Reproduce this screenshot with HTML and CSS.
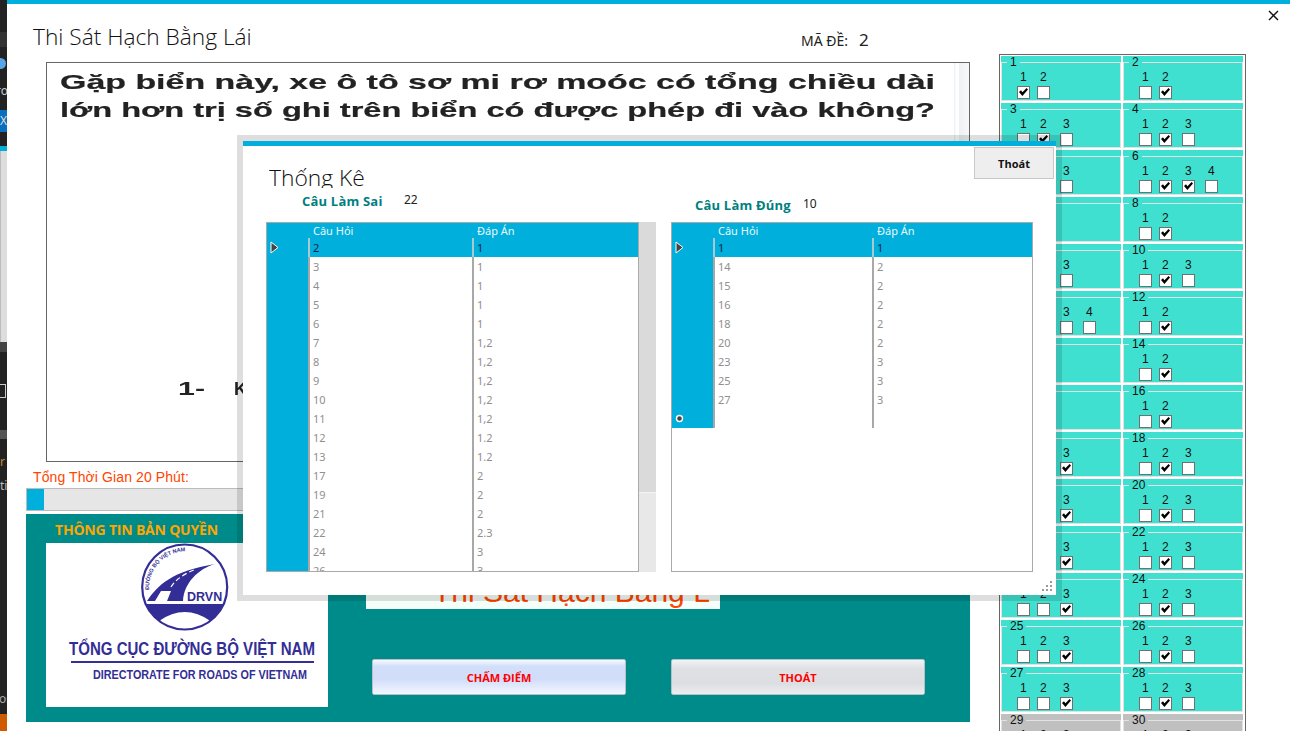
FILE: index.html
```html
<!DOCTYPE html>
<html lang="vi">
<head>
<meta charset="UTF-8">
<title>Thi Sát Hạch Bằng Lái</title>
<link rel="stylesheet" href="styles.css">
</head>
<body>
<div class="strip">
	<div class="s-gray"></div>
	<div class="s-dot"></div>
	<div class="s-txt">ro</div>
	<div class="s-blue">X</div>
	<div class="s-cyan"></div>
	<div class="s-light"></div>
	<div class="s-bar"></div>
	<div class="s-icon"></div>
	<div class="s-bar2"></div>
	<div class="s-r">r</div>
	<div class="s-ti">ti</div>
	<div class="s-os">os</div>
	<div class="s-orange"></div>
</div>

<div class="app">
	<a class="close">
		<svg width="11" height="11" viewBox="0 0 11 11"><path d="M1 1L10 10M10 1L1 10" stroke="#111" stroke-width="1.4" fill="none"/></svg>
	</a>
	<div class="left">
		<header class="head">
			<h1 class="apptitle">Thi Sát Hạch Bằng Lái</h1>
			<div class="made"><span>MÃ ĐỀ:</span><b>2</b></div>
		</header>
		<div class="picture">
			<svg class="q-svg" width="922" height="398" viewBox="0 0 922 398">
				<text x="13" y="26" textLength="875" lengthAdjust="spacingAndGlyphs" class="q-line">Gặp biển này, xe ô tô sơ mi rơ moóc có tổng chiều dài</text>
				<text x="13" y="54" textLength="875" lengthAdjust="spacingAndGlyphs" class="q-line">lớn hơn trị số ghi trên biển có được phép đi vào không?</text>
				<text x="131" y="332" textLength="27" lengthAdjust="spacingAndGlyphs" class="q-answer">1-</text>
				<text x="187" y="332" class="q-answer">K</text>
			</svg>
		</div>
		<div class="timer-label">Tổng Thời Gian 20 Phút:</div>
		<div class="progress"><div class="progress-fill"></div></div>
		<div class="panel">
			<div class="panel-left">
				<div class="panel-title">THÔNG TIN BẢN QUYỀN</div>
				<div class="logo">
					<svg width="282" height="164" viewBox="0 0 282 164">
						<defs><path id="arc" d="M103 47A37 37 0 0 1 154 11"/></defs>
						<circle cx="138.7" cy="44" r="42.5" fill="#fff" stroke="#332e96" stroke-width="2.2"/>
						<path d="M99.7 61H177.7A42.5 42.5 0 0 1 164.5 78Q138.7 60 113 78A42.5 42.5 0 0 1 99.7 61Z" fill="#332e96"/>
						<path d="M101 58C112 42 126 28 169 21C152 26 138 40 137 58H121L125 48H115L109 58Z" fill="#332e96"/>
						<path d="M125 44C130 36 138 31 150 26" fill="none" stroke="#fff" stroke-width="1.2" stroke-dasharray="5 3"/>
						<text x="141" y="58" class="logo-drvn">DRVN</text>
						<text class="logo-arc"><textPath href="#arc">ĐƯỜNG BỘ VIỆT NAM</textPath></text>
						<text x="23" y="112" textLength="246" lengthAdjust="spacingAndGlyphs" class="logo-big">TỔNG CỤC ĐƯỜNG BỘ VIỆT NAM</text>
						<rect x="25" y="118" width="243" height="2" fill="#332e96"/>
						<text x="47" y="136" textLength="214" lengthAdjust="spacingAndGlyphs" class="logo-small">DIRECTORATE FOR ROADS OF VIETNAM</text>
					</svg>
				</div>
			</div>
			<div class="panel-right">
				<div class="titlebox">Thi Sát Hạch Bằng L</div>
				<div class="actions">
					<button class="btn btn-blue">CHẤM ĐIỂM</button>
					<button class="btn btn-gray">THOÁT</button>
				</div>
			</div>
		</div>
	</div>

	<div class="sheet">
		<div class="q"><fieldset><legend>1</legend><div class="opts"><label>1<input type="checkbox" checked></label><label>2<input type="checkbox"></label></div></fieldset></div>
		<div class="q"><fieldset><legend>2</legend><div class="opts"><label>1<input type="checkbox"></label><label>2<input type="checkbox" checked></label></div></fieldset></div>
		<div class="q"><fieldset><legend>3</legend><div class="opts"><label>1<input type="checkbox"></label><label>2<input type="checkbox" checked></label><label>3<input type="checkbox"></label></div></fieldset></div>
		<div class="q"><fieldset><legend>4</legend><div class="opts"><label>1<input type="checkbox"></label><label>2<input type="checkbox" checked></label><label>3<input type="checkbox"></label></div></fieldset></div>
		<div class="q"><fieldset><legend>5</legend><div class="opts"><label>1<input type="checkbox"></label><label>2<input type="checkbox"></label><label>3<input type="checkbox"></label></div></fieldset></div>
		<div class="q"><fieldset><legend>6</legend><div class="opts"><label>1<input type="checkbox"></label><label>2<input type="checkbox" checked></label><label>3<input type="checkbox" checked></label><label>4<input type="checkbox"></label></div></fieldset></div>
		<div class="q"><fieldset><legend>7</legend></fieldset></div>
		<div class="q"><fieldset><legend>8</legend><div class="opts"><label>1<input type="checkbox"></label><label>2<input type="checkbox" checked></label></div></fieldset></div>
		<div class="q"><fieldset><legend>9</legend><div class="opts"><label>1<input type="checkbox"></label><label>2<input type="checkbox"></label><label>3<input type="checkbox"></label></div></fieldset></div>
		<div class="q"><fieldset><legend>10</legend><div class="opts"><label>1<input type="checkbox"></label><label>2<input type="checkbox" checked></label><label>3<input type="checkbox"></label></div></fieldset></div>
		<div class="q"><fieldset><legend>11</legend><div class="opts"><label>1<input type="checkbox"></label><label>2<input type="checkbox"></label><label>3<input type="checkbox"></label><label>4<input type="checkbox"></label></div></fieldset></div>
		<div class="q"><fieldset><legend>12</legend><div class="opts"><label>1<input type="checkbox"></label><label>2<input type="checkbox" checked></label></div></fieldset></div>
		<div class="q"><fieldset><legend>13</legend></fieldset></div>
		<div class="q"><fieldset><legend>14</legend><div class="opts"><label>1<input type="checkbox"></label><label>2<input type="checkbox" checked></label></div></fieldset></div>
		<div class="q"><fieldset><legend>15</legend></fieldset></div>
		<div class="q"><fieldset><legend>16</legend><div class="opts"><label>1<input type="checkbox"></label><label>2<input type="checkbox" checked></label></div></fieldset></div>
		<div class="q"><fieldset><legend>17</legend><div class="opts"><label>1<input type="checkbox"></label><label>2<input type="checkbox"></label><label>3<input type="checkbox" checked></label></div></fieldset></div>
		<div class="q"><fieldset><legend>18</legend><div class="opts"><label>1<input type="checkbox"></label><label>2<input type="checkbox" checked></label><label>3<input type="checkbox"></label></div></fieldset></div>
		<div class="q"><fieldset><legend>19</legend><div class="opts"><label>1<input type="checkbox"></label><label>2<input type="checkbox"></label><label>3<input type="checkbox" checked></label></div></fieldset></div>
		<div class="q"><fieldset><legend>20</legend><div class="opts"><label>1<input type="checkbox"></label><label>2<input type="checkbox" checked></label><label>3<input type="checkbox"></label></div></fieldset></div>
		<div class="q"><fieldset><legend>21</legend><div class="opts"><label>1<input type="checkbox"></label><label>2<input type="checkbox"></label><label>3<input type="checkbox" checked></label></div></fieldset></div>
		<div class="q"><fieldset><legend>22</legend><div class="opts"><label>1<input type="checkbox"></label><label>2<input type="checkbox" checked></label><label>3<input type="checkbox"></label></div></fieldset></div>
		<div class="q"><fieldset><legend>23</legend><div class="opts"><label>1<input type="checkbox"></label><label>2<input type="checkbox"></label><label>3<input type="checkbox" checked></label></div></fieldset></div>
		<div class="q"><fieldset><legend>24</legend><div class="opts"><label>1<input type="checkbox"></label><label>2<input type="checkbox" checked></label><label>3<input type="checkbox"></label></div></fieldset></div>
		<div class="q"><fieldset><legend>25</legend><div class="opts"><label>1<input type="checkbox"></label><label>2<input type="checkbox"></label><label>3<input type="checkbox" checked></label></div></fieldset></div>
		<div class="q"><fieldset><legend>26</legend><div class="opts"><label>1<input type="checkbox"></label><label>2<input type="checkbox" checked></label><label>3<input type="checkbox"></label></div></fieldset></div>
		<div class="q"><fieldset><legend>27</legend><div class="opts"><label>1<input type="checkbox"></label><label>2<input type="checkbox"></label><label>3<input type="checkbox" checked></label></div></fieldset></div>
		<div class="q"><fieldset><legend>28</legend><div class="opts"><label>1<input type="checkbox"></label><label>2<input type="checkbox" checked></label><label>3<input type="checkbox"></label></div></fieldset></div>
		<div class="q off"><fieldset><legend>29</legend><div class="opts"><label>1<input type="checkbox"></label><label>2<input type="checkbox"></label><label>3<input type="checkbox"></label></div></fieldset></div>
		<div class="q off"><fieldset><legend>30</legend><div class="opts"><label>1<input type="checkbox"></label><label>2<input type="checkbox"></label><label>3<input type="checkbox"></label></div></fieldset></div>
	</div>
</div>

<div class="dialog">
	<div class="dlg-head">
		<h2 class="dlg-title">Thống Kê</h2>
		<button class="dlg-exit">Thoát</button>
	</div>
	<div class="dlg-cols">
		<div class="col col-wrong">
			<div class="count count-wrong"><b>Câu Làm Sai</b><span>22</span></div>
			<div class="gridwrap">
				<div class="grid">
					<table>
						<thead><tr><th class="rh"></th><th>Câu Hỏi</th><th>Đáp Án</th></tr></thead>
						<tbody>
							<tr class="sel"><td class="rh"><svg width="9" height="13" viewBox="0 0 9 13"><path d="M1 1V12L8 6.5Z" fill="#444" stroke="#fff" stroke-width="1"/></svg></td><td>2</td><td>1</td></tr>
							<tr><td class="rh"></td><td>3</td><td>1</td></tr>
							<tr><td class="rh"></td><td>4</td><td>1</td></tr>
							<tr><td class="rh"></td><td>5</td><td>1</td></tr>
							<tr><td class="rh"></td><td>6</td><td>1</td></tr>
							<tr><td class="rh"></td><td>7</td><td>1,2</td></tr>
							<tr><td class="rh"></td><td>8</td><td>1,2</td></tr>
							<tr><td class="rh"></td><td>9</td><td>1,2</td></tr>
							<tr><td class="rh"></td><td>10</td><td>1,2</td></tr>
							<tr><td class="rh"></td><td>11</td><td>1,2</td></tr>
							<tr><td class="rh"></td><td>12</td><td>1.2</td></tr>
							<tr><td class="rh"></td><td>13</td><td>1.2</td></tr>
							<tr><td class="rh"></td><td>17</td><td>2</td></tr>
							<tr><td class="rh"></td><td>19</td><td>2</td></tr>
							<tr><td class="rh"></td><td>21</td><td>2</td></tr>
							<tr><td class="rh"></td><td>22</td><td>2.3</td></tr>
							<tr><td class="rh"></td><td>24</td><td>3</td></tr>
							<tr><td class="rh"></td><td>26</td><td>3</td></tr>
						</tbody>
					</table>
				</div>
				<div class="scroll"><div class="thumb"></div></div>
			</div>
		</div>
		<div class="col col-right">
			<div class="count count-right"><b>Câu Làm Đúng</b><span>10</span></div>
			<div class="gridwrap">
				<div class="grid">
					<table>
						<thead><tr><th class="rh"></th><th>Câu Hỏi</th><th>Đáp Án</th></tr></thead>
						<tbody>
							<tr class="sel"><td class="rh"><svg width="9" height="13" viewBox="0 0 9 13"><path d="M1 1V12L8 6.5Z" fill="#444" stroke="#fff" stroke-width="1"/></svg></td><td>1</td><td>1</td></tr>
							<tr><td class="rh"></td><td>14</td><td>2</td></tr>
							<tr><td class="rh"></td><td>15</td><td>2</td></tr>
							<tr><td class="rh"></td><td>16</td><td>2</td></tr>
							<tr><td class="rh"></td><td>18</td><td>2</td></tr>
							<tr><td class="rh"></td><td>20</td><td>2</td></tr>
							<tr><td class="rh"></td><td>23</td><td>3</td></tr>
							<tr><td class="rh"></td><td>25</td><td>3</td></tr>
							<tr><td class="rh"></td><td>27</td><td>3</td></tr>
							<tr><td class="rh"><svg width="9" height="9" viewBox="0 0 9 9"><circle cx="4.5" cy="4.5" r="3" fill="#444" stroke="#fff" stroke-width="1.4"/></svg></td><td></td><td></td></tr>
						</tbody>
					</table>
				</div>
			</div>
		</div>
	</div>
	<svg class="grip" width="11" height="12" viewBox="0 0 11 12" fill="#9a9a9a">
		<rect x="8" y="0" width="2" height="2"/>
		<rect x="4" y="4" width="2" height="2"/><rect x="8" y="4" width="2" height="2"/>
		<rect x="0" y="8" width="2" height="2"/><rect x="4" y="8" width="2" height="2"/><rect x="8" y="8" width="2" height="2"/>
	</svg>
</div>
</body>
</html>
```

FILE: styles.css
```css
html, body {margin:0; padding:0; height:731px; overflow:hidden; background:#fff; color:#222; font-family:"Noto Sans", "Open Sans", sans-serif;}
body {display:flex;}

/* what's left of the desktop behind the window */
.strip {position:relative; width:7px; height:731px; flex:none; overflow:hidden; background:#222; color:#ccc; font-size:12px; line-height:14px;}
.strip div {position:absolute; left:0; width:7px; white-space:nowrap;}
.s-gray {top:32px; height:15px; background:#333;}
.s-dot {top:58px; height:11px; left:-5px !important; width:11px !important; border-radius:50%; background:#5aa5e8;}
.s-txt {top:84px; left:-4px !important; width:14px !important;}
.s-blue {top:110px; height:22px; line-height:22px; background:#0a6fbf; color:#ddd;}
.s-cyan {top:146px; height:5px; background:#00afdb;}
.s-light {top:151px; height:191px; background:linear-gradient(90deg, #bbb 1px, #ddd 1px);}
.s-bar {top:342px; height:10px; background:#444;}
.s-icon {top:384px; height:14px; left:0; width:6px !important; border:1px solid #ccc; border-left:0; box-sizing:border-box;}
.s-bar2 {top:430px; height:9px; background:#555;}
.s-r {top:455px; color:#c9873a;}
.s-ti {top:479px; color:#bbb;}
.s-os {top:692px; left:-1px !important; width:10px !important; color:#aaa;}
.s-orange {top:714px; height:17px; background:#d05a00;}

.app {flex:1; position:relative; display:flex; align-items:flex-start; border-top:4px solid #00afdb; height:727px; overflow:hidden;}
.close {position:absolute; top:6px; right:11px; line-height:0;}

.left {width:944px; margin-left:19px; flex:none;}
.head {display:flex; height:58px; box-sizing:border-box;}
.apptitle {margin:0; width:775px; padding:18px 0 0 7px; box-sizing:border-box; font:300 22.7px/30px "Open Sans", sans-serif; color:#111;}
.made {padding-top:24px; font-size:14px; line-height:24px; color:#222;}
.made b {font-weight:400; font-size:17px; margin-left:11px;}

.picture {margin-left:20px; width:924px; height:400px; box-sizing:border-box; border:1px solid #666; overflow:hidden; background:linear-gradient(90deg, #fff 907px, #e4eef1 907px, #fff 909px, #fff 912px, #eef1f3 912px, #f6f8f9 922px);}
.q-svg {display:block; filter:blur(0.6px);}
.q-line {font:bold 20.5px "Liberation Sans", sans-serif; fill:#222; stroke:#222; stroke-width:0.2;}
.q-answer {font:bold 18px "Liberation Sans", sans-serif; fill:#222;}

.timer-label {height:26px; padding:7px 0 0 7px; box-sizing:border-box; font:14px/16px "Liberation Sans", sans-serif; letter-spacing:0.1px; color:#ff4500;}
.progress {height:23px; box-sizing:border-box; border:1px solid #bcbcbc; background:#e6e6e6;}
.progress-fill {width:17px; height:21px; background:#00afdb;}

.panel {display:flex; height:208px; margin-top:3px; background:#008b8b;}
.panel-left {width:302px; padding-left:20px; box-sizing:border-box; flex:none;}
.panel-title {height:29px; padding-left:9px; font:bold 14px/32px "Open Sans", sans-serif; color:#ffa500; white-space:nowrap; letter-spacing:-0.2px;}
.logo {width:282px; height:164px; background:#fff; line-height:0;}
.logo-drvn {font:bold 12.5px "Liberation Sans", sans-serif; fill:#332e96;}
.logo-arc {font:bold 5.5px "Liberation Sans", sans-serif; fill:#332e96;}
.logo-big {font:bold 18px "Liberation Sans", sans-serif; fill:#332e96;}
.logo-small {font:bold 12px "Liberation Sans", sans-serif; fill:#332e96;}

.panel-right {margin-left:38px;}
.titlebox {width:354px; height:49px; margin-top:46px; box-sizing:border-box; padding:15px 0 0 67px; background:#f5fffa; overflow:hidden; white-space:nowrap; font:30px/34px "Liberation Sans", sans-serif; color:#ff4500;}
.actions {display:flex; gap:45px; margin:50px 0 0 6px;}
.btn {width:254px; height:36px; padding:0; border:1px solid #b9bfc9; border-radius:2px; font:bold 11px "Open Sans", sans-serif; color:#f00;}
.btn-blue {background:linear-gradient(#f7f9ff, #d2dffa 18%, #d0dcf9 55%, #f3f7ff);}
.btn-gray {background:linear-gradient(#f2f3f5, #dfe1e5 25%, #dcdee2 70%, #eceef0);}

/* answer sheet */
.sheet {width:247px; height:720px; margin:50px 0 0 29px; box-sizing:border-box; border:1px solid #666; border-bottom:0; padding:1px 2px 0 1px; display:grid; grid-template-columns:120px 120px; grid-auto-rows:45px; gap:2px; overflow:hidden; flex:none;}
.q {background:#40e0d0;}
.q.off {background:#c0c0c0;}
.q fieldset {margin:0; padding:0 0 0 15px; height:45px; box-sizing:border-box; border:1px solid #e2e2e2;}
.q legend {margin-left:-10px; padding:0 3px; font:12px/13px "Liberation Sans", sans-serif; color:#111;}
.opts {display:flex; margin-top:1px;}
.opts label {display:flex; flex-direction:column; align-items:flex-start; width:23px; flex:none; font:12px/14px "Liberation Sans", sans-serif; text-indent:3px; color:#111;}
.opts label:first-child {width:20px;}
.opts input {appearance:none; -webkit-appearance:none; width:13px; height:13px; margin:2px 0 0; background:#fff; border:1px solid #707070; box-sizing:border-box;}
.opts input:checked::after {content:""; display:block; width:9px; height:8px; margin:1px 0 0 1px; background:#000; clip-path:polygon(0 50%, 22% 28%, 38% 52%, 84% 0, 100% 18%, 38% 100%);}

/* statistics window */
.dialog {position:absolute; left:243px; top:141px; width:813px; height:454px; box-sizing:border-box; border-top:5px solid #00afdb; background:#fff; box-shadow:0 0 0 6px rgba(0,0,0,0.13);}
.dlg-head {display:flex; justify-content:space-between; align-items:flex-start; height:46px;}
.dlg-title {margin:19px 0 0 26px; height:23px; overflow:hidden; font:300 22.8px/26px "Open Sans", sans-serif; color:#111;}
.dlg-exit {width:80px; height:32px; margin:1px 2px 0 0; padding:0; background:#eee; border:1px solid #c8c8c8; font:bold 11px "Open Sans", sans-serif; color:#111;}
.dlg-cols {display:flex; padding-left:23px;}
.col {flex:none;}
.col-wrong {width:390px;}
.col-right {width:362px; margin-left:15px;}
.count {display:flex; height:30px; box-sizing:border-box; font-size:12px;}
.count b {font:bold 13px/18px "Open Sans", sans-serif; letter-spacing:0.2px; color:#007f7f;}
.count-wrong {padding-left:36px;}
.count-wrong b {width:102px;}
.count-wrong span {line-height:16px;}
.count-right {padding:4px 0 0 24px;}
.count-right b {width:108px;}
.count-right span {line-height:16px;}

.gridwrap {display:flex; height:350px;}
.grid {flex:1; min-width:0; box-sizing:border-box; border:1px solid #aaa; overflow:hidden; background:#fff;}
.scroll {width:17px; flex:none; background:#e8e8e8;}
.thumb {height:270px; background:#dadada; border-bottom:1px solid #f4f4f4;}

.grid table {border-collapse:separate; border-spacing:0; table-layout:fixed; width:100%; font-size:11px; color:#8f8f8f;}
.grid th {height:15px; padding:0 0 0 5px; box-sizing:border-box; background:#00afdb; color:#e8f7fb; font-weight:400; text-align:left; line-height:15px;}
.grid td {height:19px; padding:0 0 0 3px; line-height:19px; border-left:2px solid #a8a8a8; box-sizing:border-box;}
.grid th.rh, .grid td.rh {width:41px; padding:0; background:#00afdb; border-left:0; line-height:0;}
.grid td.rh svg {margin-left:3px; vertical-align:middle;}
.grid th:nth-child(2), .grid td:nth-child(2) {width:164px;}
.col-right .grid th:nth-child(2), .col-right .grid td:nth-child(2) {width:159px;}
.grid .sel td {background:#00afdb; color:#0c2444;}
.grid .sel td:nth-child(n+2) {border-left-color:#a8c8d4;}

.grip {position:absolute; right:3px; bottom:2px;}
```
